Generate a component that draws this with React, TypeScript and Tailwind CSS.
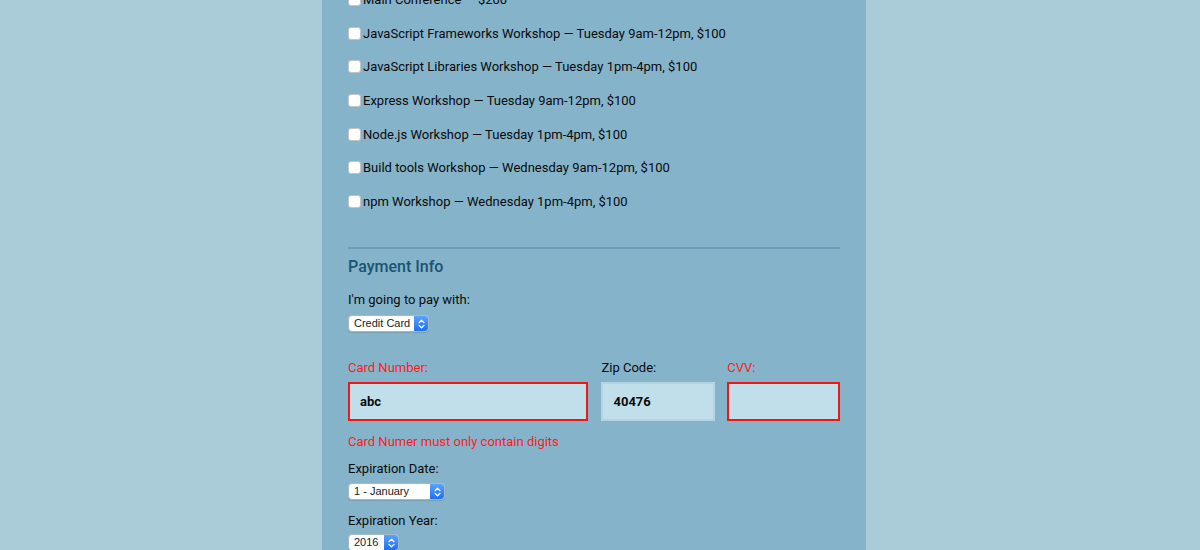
const activities = [
  "Main Conference — $200",
  "JavaScript Frameworks Workshop — Tuesday 9am-12pm, $100",
  "JavaScript Libraries Workshop — Tuesday 1pm-4pm, $100",
  "Express Workshop — Tuesday 9am-12pm, $100",
  "Node.js Workshop — Tuesday 1pm-4pm, $100",
  "Build tools Workshop — Wednesday 9am-12pm, $100",
  "npm Workshop — Wednesday 1pm-4pm, $100",
];

function MacSelect({ value, width }: { value: string; width: string }) {
  return (
    <div
      className={`${width} h-[17px] flex items-stretch rounded-[4px] bg-white border border-[#a7b9c2] shadow-[0_1px_1px_rgba(0,0,0,0.12)] overflow-hidden`}
    >
      <span className="flex-1 pl-[5px] text-[11px] leading-[15px] text-[#222] font-['Liberation_Sans',sans-serif] whitespace-nowrap overflow-hidden">
        {value}
      </span>
      <span className="w-[14px] flex items-center justify-center bg-gradient-to-b from-[#5aa2ff] to-[#1e6ff3]">
        <svg width="7" height="10" viewBox="0 0 7 10" fill="none" stroke="white" strokeWidth="1.3" strokeLinecap="round" strokeLinejoin="round">
          <path d="M1 3.6 L3.5 1.2 L6 3.6" />
          <path d="M1 6.4 L3.5 8.8 L6 6.4" />
        </svg>
      </span>
    </div>
  );
}

export default function App() {
  return (
    <div className="h-[550px] overflow-hidden bg-[#aacbd8] font-['Roboto',sans-serif] text-[13px] text-[#0a0a0a]">
      <div className="ml-[322px] w-[544px] h-full bg-[#85b4ca] px-[26px] flex flex-col">
        <div className="-mt-[17px] flex flex-col">
          {activities.map((a) => (
            <label key={a} className="h-[33.6px] flex items-center">
              <span className="w-[13px] h-[13px] mr-[2px] rounded-[3px] bg-white border border-[#c4c4c4]" />
              <span className="leading-[17px]">{a}</span>
            </label>
          ))}
        </div>

        <div className="mt-[29px] border-t-2 border-[#6b9fb6]" />

        <h3 className="mt-[8px] leading-[20px] text-[16px] font-medium text-[#1a5470]">Payment Info</h3>

        <p className="mt-[14px] leading-[17px]">I'm going to pay with:</p>
        <div className="mt-[7px]">
          <MacSelect value="Credit Card" width="w-[81px]" />
        </div>

        <div className="mt-[27px] flex gap-[12px]">
          <div className="w-[241px] flex flex-col">
            <span className="leading-[17px] text-[#ff1a1a]">Card Number:</span>
            <div className="mt-[6px] h-[39px] bg-[#c1dfea] border-2 border-[#f01616] pl-[10px] flex items-center font-bold">
              abc
            </div>
          </div>
          <div className="ml-[1px] w-[114px] flex flex-col">
            <span className="leading-[17px]">Zip Code:</span>
            <div className="mt-[6px] h-[39px] bg-[#c1dfea] border-2 border-[#b3d4e1] pl-[10px] flex items-center font-bold">
              40476
            </div>
          </div>
          <div className="w-[113px] flex flex-col">
            <span className="leading-[17px] text-[#ff1a1a]">CVV:</span>
            <div className="mt-[6px] h-[39px] bg-[#c1dfea] border-2 border-[#f01616]" />
          </div>
        </div>

        <p className="mt-[12px] leading-[17px] text-[#ff1a1a]">Card Numer must only contain digits</p>

        <p className="mt-[10px] leading-[17px]">Expiration Date:</p>
        <div className="mt-[6px]">
          <MacSelect value="1 - January" width="w-[97px]" />
        </div>

        <p className="mt-[12px] leading-[17px]">Expiration Year:</p>
        <div className="mt-[5px]">
          <MacSelect value="2016" width="w-[51px]" />
        </div>
      </div>
    </div>
  );
}
